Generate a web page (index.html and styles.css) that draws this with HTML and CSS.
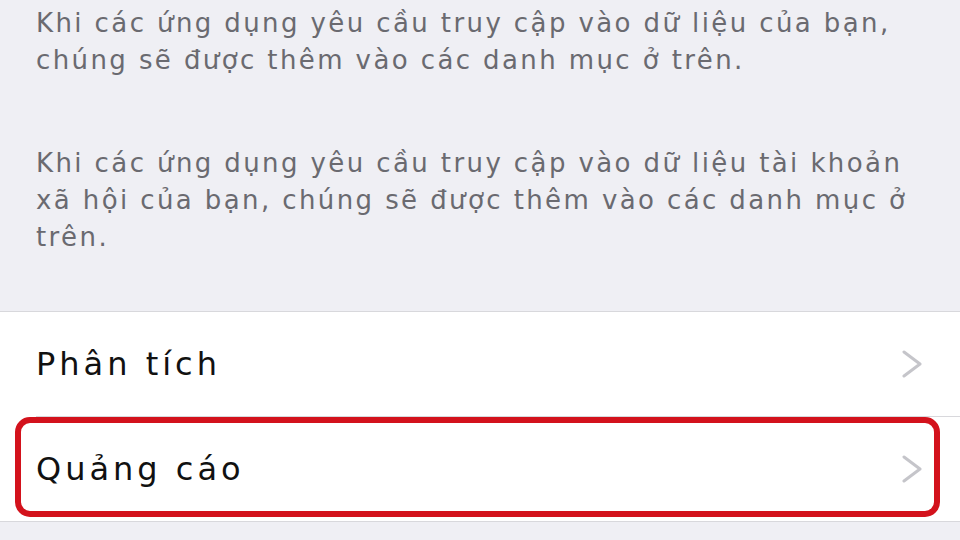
FILE: index.html
```html
<!DOCTYPE html>
<html lang="vi">
<head>
<meta charset="utf-8">
<title>Quyền riêng tư</title>
<link rel="stylesheet" href="styles.css">
</head>
<body>
<div class="screen">
  <p class="note note-first">Khi các ứng dụng yêu cầu truy cập vào dữ liệu của bạn,<br>chúng sẽ được thêm vào các danh mục ở trên.</p>
  <p class="note note-second">Khi các ứng dụng yêu cầu truy cập vào dữ liệu tài khoản<br>xã hội của bạn, chúng sẽ được thêm vào các danh mục ở<br>trên.</p>
  <ul class="group">
    <li class="row">
      <span class="label">Phân tích</span>
      <svg class="chevron" viewBox="0 0 20 28" width="20" height="28"><path d="M2 2 L18 14 L2 26" fill="none" stroke="#c5c5ca" stroke-width="3" stroke-linecap="round" stroke-linejoin="round"/></svg>
    </li>
    <li class="row row-highlight">
      <span class="label">Quảng cáo</span>
      <svg class="chevron" viewBox="0 0 20 28" width="20" height="28"><path d="M2 2 L18 14 L2 26" fill="none" stroke="#c5c5ca" stroke-width="3" stroke-linecap="round" stroke-linejoin="round"/></svg>
    </li>
  </ul>
</div>
</body>
</html>
```

FILE: styles.css
```css
html, body {
  margin: 0;
  padding: 0;
}
body {
  background: #efeff4;
  font-family: "DejaVu Sans", "Liberation Sans", sans-serif;
  width: 960px;
  height: 540px;
  overflow: hidden;
}
.screen {
  display: flex;
  flex-direction: column;
}
.note {
  margin: 0;
  padding: 0 36px;
  color: #6a6a70;
  font-size: 26px;
  line-height: 37px;
  letter-spacing: 2.4px;
  white-space: nowrap;
}
.note-first {
  padding-top: 5px;
}
.note-second {
  margin-top: 66px;
}
.group {
  list-style: none;
  margin: 55px 0 0 0;
  padding: 0;
  background: #ffffff;
  border-top: 1px solid #d8d8dc;
  border-bottom: 1px solid #d8d8dc;
}
.row {
  position: relative;
  height: 104px;
  display: flex;
  align-items: center;
  justify-content: space-between;
  padding: 0 38px 0 36px;
}
.row + .row {
  border-top: 1px solid #d8d8dc;
  margin-left: 36px;
  padding-left: 0;
}
.label {
  color: #111111;
  font-size: 32px;
  letter-spacing: 4px;
}
.chevron {
  display: block;
}
.row-highlight::after {
  content: "";
  position: absolute;
  left: -21px;
  right: 20px;
  top: 0;
  bottom: 4px;
  border: 6px solid #d3121c;
  border-radius: 15px;
}
```
